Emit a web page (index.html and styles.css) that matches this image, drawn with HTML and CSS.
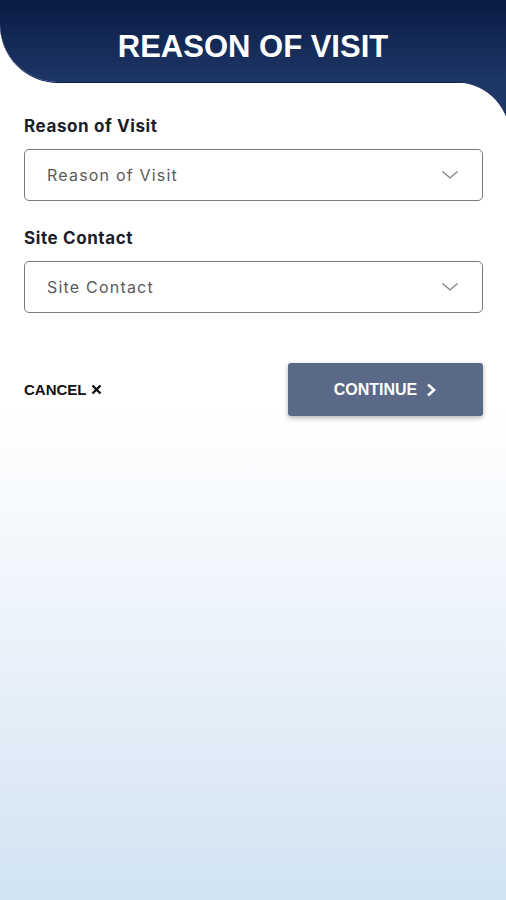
FILE: index.html
```html
<!DOCTYPE html>
<html lang="en">
<head>
  <meta charset="UTF-8" />
  <meta name="viewport" content="width=device-width, initial-scale=1.0"/>
  <title>Reason of Visit</title>
  <link rel="stylesheet" href="styles.css">
</head>
<body>
  <div class="header">
    <h1>REASON OF VISIT</h1>
  </div>

  <div class="visit-form">
    <label class="field-label">Reason of Visit</label>
    <div class="select-box">
      <span>Reason of Visit</span>
      <svg class="chevron" width="18" height="10" viewBox="0 0 18 10">
        <path d="M1.5 1.5 L9 8 L16.5 1.5" fill="none" stroke="#808080" stroke-width="1.3" />
      </svg>
    </div>

    <label class="field-label">Site Contact</label>
    <div class="select-box">
      <span>Site Contact</span>
      <svg class="chevron" width="18" height="10" viewBox="0 0 18 10">
        <path d="M1.5 1.5 L9 8 L16.5 1.5" fill="none" stroke="#808080" stroke-width="1.3" />
      </svg>
    </div>

    <div class="actions">
      <button class="btn-cancel">
        CANCEL
        <svg width="11" height="11" viewBox="0 0 11 11">
          <path d="M1.5 1.5 L9.5 9.5 M9.5 1.5 L1.5 9.5" stroke="#111" stroke-width="2.4" />
        </svg>
      </button>
      <button class="btn-continue">
        CONTINUE
        <svg width="12" height="14" viewBox="0 0 12 14">
          <path d="M3 1.5 L9 7 L3 12.5" fill="none" stroke="#fff" stroke-width="2.6" />
        </svg>
      </button>
    </div>
  </div>
</body>
</html>
```

FILE: styles.css
```css
body {
  margin: 0;
  min-height: 900px;
  font-family: Inter, "Noto Sans", sans-serif;
  background: linear-gradient(#fff 0px, #fff 410px, #eef4fb 610px, #d1e3f2 900px);
}

.header {
  position: relative;
  height: 82px;
  background: linear-gradient(#0a1b44, #1e3767);
  border-bottom-left-radius: 58px;
  display: flex;
  align-items: center;
  justify-content: center;
  box-shadow: 0 1px 0 #0c1a5a;
}

/* the tail that curves down on the right */
.header::after {
  content: "";
  position: absolute;
  right: 0;
  top: 100%;
  width: 50px;
  height: 34px;
  background: radial-gradient(circle 54px at 0 54px, transparent 53px, #1e3767 54px);
}

.header h1 {
  margin: 12px 0 0;
  color: #fff;
  font-family: "Liberation Sans", Arial, sans-serif;
  font-weight: bold;
  font-size: 31px;
}

.visit-form {
  padding: 34px 23px 0 24px;
}

.field-label {
  display: block;
  font-size: 17px;
  font-weight: 700;
  letter-spacing: 0.6px;
  color: #1b1d2a;
  line-height: 20px;
  margin-bottom: 13px;
}

.select-box {
  height: 50px;
  border: 1px solid #7a7a7a;
  border-radius: 5px;
  display: flex;
  align-items: center;
  justify-content: space-between;
  padding: 0 22px;
  margin-bottom: 27px;
  color: #5a5a5a;
  font-size: 16px;
  letter-spacing: 1.2px;
  background: #fff;
}

.chevron {
  margin-right: 1px;
}

.actions {
  display: flex;
  justify-content: space-between;
  align-items: center;
  margin-top: 50px;
}

button {
  font-family: "Liberation Sans", Arial, sans-serif;
  font-weight: bold;
  border: none;
  cursor: pointer;
}

.btn-cancel {
  background: none;
  padding: 0;
  font-size: 15px;
  color: #111;
  display: flex;
  align-items: center;
  gap: 4px;
}

.btn-continue {
  width: 195px;
  height: 53px;
  background: #5a6987;
  color: #fff;
  font-size: 16px;
  border-radius: 3px;
  box-shadow: 0 2px 5px rgba(0, 0, 0, 0.3);
  display: flex;
  align-items: center;
  justify-content: center;
  gap: 8px;
}
```
